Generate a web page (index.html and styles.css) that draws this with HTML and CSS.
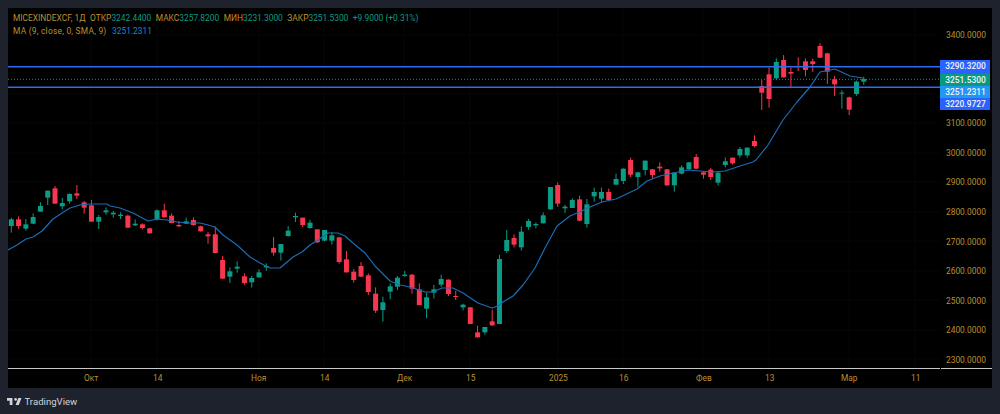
FILE: index.html
```html
<!DOCTYPE html>
<html lang="ru">
<head>
<meta charset="utf-8">
<title>MICEXINDEXCF</title>
<link rel="stylesheet" href="styles.css">
</head>
<body>
<main class="chart">
  <div class="plot-row">
    <div class="plot">
      <svg id="series" class="series" width="932" height="360" viewBox="8 8 932 360"></svg>
      <div class="legend">
        <div class="legend-row"><span class="sym">MICEXINDEXCF, 1Д</span><span>ОТКР<b>3242.4400</b></span><span>МАКС<b>3257.8200</b></span><span>МИН<b>3231.3000</b></span><span>ЗАКР<b>3251.5300</b></span><b>+9.9000 (+0.31%)</b></div>
        <div class="legend-row"><span class="sym-wide">MA (9, close, 0, SMA, 9)</span><b class="ma">3251.2311</b></div>
      </div>
    </div>
    <div class="scale">
      <span>3400.0000</span><span></span><span></span><span>3100.0000</span>
      <span>3000.0000</span><span>2900.0000</span><span>2800.0000</span><span>2700.0000</span>
      <span>2600.0000</span><span>2500.0000</span><span>2400.0000</span><span>2300.0000</span>
      <div class="tags">
        <div class="tag tag-line tag-top">3290.3200</div>
        <div class="tag tag-close">3251.5300</div>
        <div class="tag tag-ma">3251.2311</div>
        <div class="tag tag-line">3220.9727</div>
      </div>
    </div>
  </div>
  <div class="time">
    <span style="left:76px">Окт</span>
    <span style="left:145px">14</span>
    <span style="left:243px">Ноя</span>
    <span style="left:312px">14</span>
    <span style="left:389px">Дек</span>
    <span style="left:458px">15</span>
    <span style="left:541px">2025</span>
    <span style="left:611px">16</span>
    <span style="left:688px">Фев</span>
    <span style="left:757px">13</span>
    <span style="left:833px">Мар</span>
    <span style="left:903px">11</span>
  </div>
</main>
<footer class="brand">
  <svg class="brand-mark" viewBox="2 6 32 15" width="14.500" height="7" aria-hidden="true"><path d="M14 6H2v6h6v9h6V6zm14 15h-7l6-15h7l-6 15zm-7-9a3 3 0 1 0 0-6 3 3 0 0 0 0 6z"/></svg>
  <span>TradingView</span>
</footer>
<script src="chart.js"></script>
</body>
</html>
```
FILE: styles.css
```css
html, body { margin: 0; padding: 0; }
body {
  width: 1000px;
  height: 414px;
  overflow: hidden;
  background: #1e222d;
  font-family: Roboto, "Noto Sans", sans-serif;
  padding: 8px 8px 0;
  box-sizing: border-box;
}
.chart {
  width: 984px;
  height: 380px;
  background: #000;
  display: flex;
  flex-direction: column;
  color: #bb8f30;
  font-size: 8.400px;
}
.plot-row { display: flex; height: 360px; }
.plot { position: relative; width: 932px; height: 360px; }
.series { display: block; }
.legend {
  position: absolute;
  left: 5px;
  top: 4px;
  display: flex;
  flex-direction: column;
  line-height: 12px;
  white-space: nowrap;
}
.legend-row { display: flex; gap: 4.500px; height: 12.500px; }
.legend .sym-wide { letter-spacing: 0.250px; margin-right: 1px; }
.legend b { font-weight: 400; color: #0a9c84; }
.legend .ma { color: #1f82d6; }
.scale {
  position: relative;
  width: 52px;
  height: 360px;
  box-sizing: border-box;
  padding: 20.500px 0 0 6px;
  display: flex;
  flex-direction: column;
  line-height: 13px;
}
.scale > span { height: 29.600px; flex: none; }
.tags {
  position: absolute;
  left: 0;
  top: 52px;
  width: 50px;
  display: flex;
  flex-direction: column;
}
.tag {
  height: 12px;
  line-height: 12px;
  padding-left: 1px;
  text-align: center;
  color: #f4f4f4;
  font-weight: 500;
}
.tag-top { height: 13.500px; line-height: 13.500px; }
.tag-line { background: #2962ff; }
.tag-close { background: #089981; }
.tag-ma { background: #2196f3; height: 12.500px; }
.time {
  position: relative;
  height: 20px;
  background: #000;
  line-height: 20px;
}
.time::before {
  content: "";
  position: absolute;
  left: 0;
  right: 0;
  top: 0;
  height: 1px;
  background: linear-gradient(to right, #c8c8c8 932px, #000 932px, #000 933px, #c8c8c8 933px);
}
.time span { position: absolute; top: 0; }
.brand {
  display: flex;
  align-items: center;
  gap: 3px;
  height: 26px;
  margin-left: -1px;
  color: #d1d4dc;
  font-size: 9.600px;
}
.brand-mark { fill: #d1d4dc; display: block; }
```
FILE: chart.js
```js
// Candles: [body top, body bottom, wick top, wick bottom, colour] in zoomed coordinates, by section.
var sections = [
  { y0: 170, c: [
    [148,168,143,188,'g'],[148,168,139,176,'r'],[163,176,147,182,'g'],[141,161,130,162,'g'],
    [108,125,97,125,'g'],[62,83,62,105,'g'],[55,101,48,101,'r'],[99,109,84,118,'g'],
    [72,94,70,101,'g'],[70,77,45,87,'r'],[97,113,93,131,'r'],[106,155,90,155,'r'],
    [141,155,135,177,'g'],[121,127,112,134,'g'],[128,133,123,143,'g'],[134,138,127,147,'g'],
    [137,173,134,174,'r'],[161,166,148,168,'g'],[163,174,160,178,'r'],[175,190,173,191,'r'],
    [121,149,118,152,'g'],[121,142,101,143,'r'],[137,159,130,160,'r'],[165,169,153,172,'r'],
    [154,161,143,162,'g'],[150,165,142,167,'r'],[169,184,167,185,'r'],[193,199,186,221,'r'],
    [193,249,170,250,'r'],[270,326,258,327,'r'],[304,320,292,339,'g'],[290,296,274,308,'g'],
    [319,339,310,344,'r'] ] },
  { y0: 200, c: [
    [234,247,228,263,'g'],[217,232,208,233,'g'],[198,202,190,212,'g'],[144,158,111,167,'r'],
    [132,158,132,182,'g'],[92,108,78,110,'g'],[48,52,38,66,'g'],[53,75,53,81,'r'],
    [68,84,60,86,'g'],[88,127,88,129,'r'],[90,122,90,124,'g'],[106,122,96,134,'g'],
    [112,186,110,191,'r'],[178,217,153,218,'r'],[215,240,207,248,'r'],[198,230,186,231,'r'],
    [226,276,220,285,'r'],[281,332,262,339,'r'],[307,330,290,365,'g'],[259,275,250,298,'g'],
    [233,260,228,270,'g'],[224,228,213,230,'g'],[224,266,222,281,'r'],[268,315,250,316,'r'],
    [292,326,278,355,'g'],[268,278,255,296,'g'],[237,254,224,261,'g'],[239,282,238,288,'r'],
    [288,291,272,300,'r'],[314,322,311,331,'g'],[322,372,321,372,'r'],[397,412,377,413,'r'],
    [381,397,381,404,'g'],[364,376,329,378,'r'] ] },
  { y0: 140, c: [
    [357,552,345,552,'g'],[300,333,270,339,'g'],[294,314,283,322,'r'],[275,322,259,332,'g'],
    [243,261,237,269,'g'],[252,256,247,265,'g'],[226,250,217,250,'g'],[141,208,141,209,'g'],
    [135,191,127,201,'r'],[200,205,195,219,'g'],[180,204,175,204,'g'],[178,242,167,243,'r'],
    [193,252,177,263,'g'],[156,169,143,185,'g'],[156,176,143,186,'g'],[156,180,146,181,'r'],
    [117,134,101,134,'g'],[86,123,85,132,'g'],[60,104,53,111,'r'],[97,111,96,140,'g'],
    [62,90,61,106,'g'],[88,105,87,116,'r'],[80,85,67,95,'r'],[88,136,87,138,'r'],
    [98,136,98,155,'g'],[82,101,76,103,'g'],[67,88,66,89,'g'],[51,86,42,88,'r'],
    [97,104,95,116,'r'],[89,111,84,120,'r'],[98,128,96,136,'g'],[64,75,52,82,'g'],
    [53,70,52,74,'r'],[27,46,21,53,'g'],[23,46,22,53,'g'] ] },
  { y0: 30, c: [
    [333,348,316,352,'r'],[168,188,150,240,'r'],[133,207,113,233,'r'],[96,145,85,150,'g'],
    [90,142,75,143,'r'],[126,131,113,172,'r'],[108,111,82,123,'r'],[94,120,85,139,'r'],
    [94,102,86,126,'r'],[48,83,40,84,'r'],[70,125,68,162,'r'],[148,163,138,198,'r'],
    [188,191,181,236,'g'],[202,239,200,255,'r'],[155,192,152,197,'g'],[147,155,140,165,'g'] ] }
];

var ma = [
  [8,250],[17,245],[26,239],[33,237],[42,231],[53,219],[62,213],[70,208],[80,205],[90,204],
  [107,204],[110,206],[120,208],[133,213],[148,221],[157,219],[167,220],[177,222],[187,223],
  [200,223],[208,225],[215,227],[223,235],[237,245],[250,257],[260,263],[270,268],[280,268],
  [293,257],[302,252],[310,245],[318,240],[328,233],[338,233],[345,236],[353,243],[365,253],
  [375,266],[390,281],[400,285],[410,287],[425,292],[433,292],[442,288],[453,288],[463,293],
  [478,303],[492,308],[498,306],[503,302],[513,296],[523,285],[535,268],[545,248],[557,226],
  [570,216],[577,213],[590,207],[602,202],[616,199],[637,189],[647,181],[660,176],[673,173],
  [688,170],[700,171],[713,172],[725,171],[740,166],[753,162],[756,160],[768,145],[783,120],
  [797,102],[810,87],[820,72],[835,69],[850,76],[863,78]
];

var NS = 'http://www.w3.org/2000/svg';
var svg = document.getElementById('series');
function el(name, attrs) {
  var n = document.createElementNS(NS, name);
  for (var k in attrs) n.setAttribute(k, attrs[k]);
  svg.appendChild(n);
}
// faint grid
[35,65,94,123,153,182,212,241,271,300,330,359].forEach(function (y) {
  el('line', { x1: 8, x2: 940, y1: y, y2: y, stroke: '#070707', 'stroke-width': 1 });
});
[91,157,259,324,404,470,558,623,703,769,849,915].forEach(function (x) {
  el('line', { x1: x, x2: x, y1: 8, y2: 368, stroke: '#070707', 'stroke-width': 1 });
});
// close price line
el('line', { x1: 8, x2: 940, y1: 79.300, y2: 79.300, stroke: '#089981', 'stroke-width': 1, 'stroke-dasharray': '1 2' });
// candles
var COL = { g: '#0b9c85', r: '#f7364f' };
var i = 0;
sections.forEach(function (s) {
  s.c.forEach(function (c) {
    var x = 11.300 + 7.286 * i, col = COL[c[4]];
    var y = function (v) { return s.y0 + v / 3; };
    el('line', { x1: x, x2: x, y1: y(c[2]), y2: y(c[3]), stroke: col, 'stroke-width': 1 });
    el('rect', { x: x - 2.500, width: 5, y: y(c[0]), height: Math.max(y(c[1]) - y(c[0]), 1), fill: col });
    i++;
  });
});
el('polyline', {
  points: ma.map(function (p) { return p.join(','); }).join(' '),
  fill: 'none', stroke: '#1a6db5', 'stroke-width': 1.200, 'stroke-linejoin': 'round'
});
[66.700, 87.300].forEach(function (y) {
  el('line', { x1: 8, x2: 940, y1: y, y2: y, stroke: '#2f6cf0', 'stroke-width': 1.400 });
});
```
